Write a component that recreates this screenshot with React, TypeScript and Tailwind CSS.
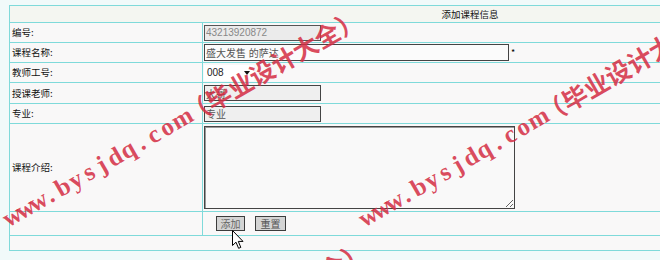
import React from "react";

const cjk = "font-['Noto_Sans_CJK_SC',sans-serif]";

function Watermark({ className }: { className: string }) {
  const ascii = "www.bysjdq.com".split("");
  return (
    <div
      className={
        "absolute flex items-center whitespace-nowrap text-[25px] leading-[25px] text-[rgba(212,44,66,0.85)] origin-left -rotate-30 pointer-events-none " +
        className
      }
    >
      {ascii.map((c, i) => (
        <span
          key={i}
          className="inline-block w-[15px] text-center font-['Liberation_Serif',serif] font-bold"
        >
          {c}
        </span>
      ))}
      <span className={cjk + " font-bold"}>（毕业设计大全）</span>
    </div>
  );
}

function Row({
  h,
  label,
  children,
}: {
  h: string;
  label: string;
  children?: React.ReactNode;
}) {
  return (
    <div className={"flex border-b border-[#7fdada] " + h}>
      <div className="w-[193px] shrink-0 border-r border-[#7fdada] flex items-center pl-[2px] text-[9.5px] text-[#111]">
        {label}
      </div>
      <div className="flex-1 flex items-center pl-[1px]">{children}</div>
    </div>
  );
}

const inputText = "font-['Liberation_Sans','Noto_Sans_CJK_SC',sans-serif] text-[10px]";

export default function App() {
  return (
    <div className={"relative w-[660px] h-[260px] overflow-hidden bg-[#f1fafa] " + cjk}>
      <div className="ml-[9px] pt-[5px]">
        <div className="w-[922px] border border-[#7fdada] bg-[#f9f8f8]">
          <div className="h-[17px] border-b border-[#7fdada] bg-[#f4f6f1] flex items-center justify-center text-[9.5px] text-[#111]">
            添加课程信息
          </div>
          <Row h="h-[20px]" label="编号:">
            <input
              readOnly
              value="43213920872"
              className={"w-[117px] h-[16px] border border-[#555] bg-[#ebebeb] px-[1px] leading-[14px] text-[#888] outline-none " + inputText}
            />
          </Row>
          <Row h="h-[20px]" label="课程名称:">
            <input
              readOnly
              value="盛大发售 的萨达"
              className={"w-[305px] h-[17px] border border-[#444] bg-[#fbfbfb] px-[1px] leading-[15px] text-[#555] outline-none " + inputText}
            />
            <span className="ml-[2px] text-[9px] leading-none text-black">*</span>
          </Row>
          <Row h="h-[20px]" label="教师工号:">
            <div className="flex items-center justify-between w-[50px] h-[16px] bg-white pl-[3px] pr-[4px]">
              <span className={"leading-[16px] text-[#222] " + inputText}>008</span>
              <svg width="6" height="4" viewBox="0 0 6 4">
                <path d="M0 0 L6 0 L3 4 Z" fill="#111" />
              </svg>
            </div>
          </Row>
          <Row h="h-[21px]" label="授课老师:">
            <input
              readOnly
              value="大哥"
              className={"w-[117px] h-[16px] border border-[#444] bg-[#efefef] px-[1px] leading-[14px] text-[#555] outline-none " + inputText}
            />
          </Row>
          <Row h="h-[20px]" label="专业:">
            <input
              readOnly
              value="专业"
              className={"w-[117px] h-[16px] border border-[#444] bg-[#efefef] px-[1px] leading-[14px] text-[#555] outline-none " + inputText}
            />
          </Row>
          <Row h="h-[88px]" label="课程介绍:">
            <textarea
              readOnly
              className="w-[311px] h-[83px] border border-[#444] shadow-[inset_1px_1px_0_#999] bg-[#f9f9f9] outline-none"
            />
          </Row>
          <Row h="h-[24px]" label="">
            <div className="flex items-center gap-[10px] pl-[12px]">
              <div className="w-[29px] h-[15px] border border-[#3c3c3c] bg-[#d4d4d4] text-[10px] leading-[13px] text-[#666] flex items-center justify-center">
                添加
              </div>
              <div className="w-[31px] h-[15px] border border-[#3c3c3c] bg-[#d4d4d4] text-[10px] leading-[13px] text-[#555] flex items-center justify-center">
                重置
              </div>
            </div>
          </Row>
          <div className="h-[14px]" />
        </div>
      </div>

      <Watermark className="left-[4px] top-[208px]" />
      <Watermark className="left-[360px] top-[208px]" />
      <Watermark className="left-[10px] top-[440px]" />

      <svg className="absolute left-[232px] top-[230px]" width="13" height="20" viewBox="0 0 13 20">
        <path
          d="M0.5 0.5 L0.5 15.5 L4 12.2 L6.6 18.3 L8.8 17.4 L6.3 11.4 L11 11.4 Z"
          fill="#fff"
          stroke="#000"
          strokeWidth="1"
          strokeLinejoin="miter"
        />
      </svg>
    </div>
  );
}
